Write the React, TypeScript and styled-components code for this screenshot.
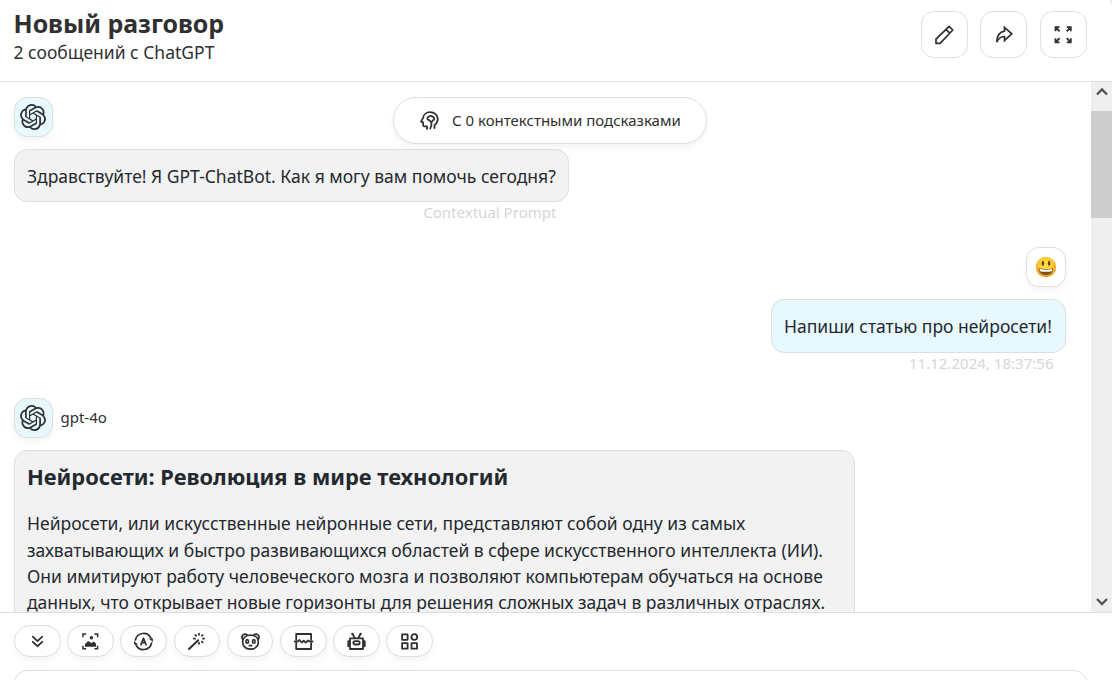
import React from "react";
import styled, { createGlobalStyle } from "styled-components";
import { SiOpenai } from "react-icons/si";

const GlobalStyle = createGlobalStyle`
  *, *::before, *::after { box-sizing: border-box; }
  html, body { margin: 0; height: 100%; overflow: hidden; background: #ececec; }
  body { font-family: "Noto Sans", sans-serif; color: #303030; }
`;

const Window = styled.div`
  width: 1113px;
  height: 688px;
  margin-top: -8px;
  padding-top: 8px;
  display: flex;
  flex-direction: column;
  background: #fff;
  border-top-right-radius: 20px;
  overflow: hidden;
`;

const Header = styled.header`
  flex: none;
  height: 82px;
  padding: 9px 26px 0 13.5px;
  display: flex;
  justify-content: space-between;
  border-bottom: 1px solid #dedede;
`;

const Title = styled.h1`
  margin: 0;
  font-size: 24.9px;
  line-height: 29px;
  padding-bottom: 1px;
  font-weight: 700;
  white-space: nowrap;
`;

const SubTitle = styled.div`
  font-size: 17.5px;
  line-height: 27px;
  white-space: nowrap;
`;

const Actions = styled.div`
  display: flex;
  gap: 12.5px;
  padding-top: 2px;
`;

const IconButton = styled.button`
  width: 47px;
  height: 47px;
  padding: 0;
  display: flex;
  align-items: center;
  justify-content: center;
  border: 1px solid #dedede;
  border-radius: 13px;
  background: #fff;
  color: #303030;

  &:nth-child(2) {
    margin-left: -0.5px;
    margin-right: 0.5px;
    padding-left: 1px;
  }
`;

const Body = styled.main`
  flex: none;
  height: 530px;
  display: flex;
  position: relative;
`;

const Messages = styled.section`
  flex: 1;
  padding: 15px 25px 0 14px;
  display: flex;
  flex-direction: column;
  overflow: hidden;
`;

const Message = styled.article<{ $user?: boolean }>`
  flex: none;
  display: flex;
  flex-direction: column;
  align-items: ${(p) => (p.$user ? "flex-end" : "flex-start")};
`;

const Sender = styled.div`
  display: flex;
  align-items: center;
  gap: 7.5px;
  margin-bottom: 12px;
  font-size: 15px;
  line-height: 20px;
`;

const ModelName = styled.span`
  padding-bottom: 2px;
`;

const Avatar = styled.div<{ $bot?: boolean }>`
  width: ${(p) => (p.$bot ? "39px" : "40px")};
  height: 40px;
  padding-right: ${(p) => (p.$bot ? "1px" : "0")};
  padding-bottom: ${(p) => (p.$bot ? "1px" : "0")};
  display: flex;
  align-items: center;
  justify-content: center;
  border: 1px solid #dedede;
  border-radius: 13px;
  background: ${(p) => (p.$bot ? "#e7f8ff" : "#fff")};
  box-shadow: 0 3px 6px rgba(0, 0, 0, 0.05);
`;

const Bubble = styled.div<{ $user?: boolean; $width: number; $tall?: boolean }>`
  width: ${(p) => p.$width}px;
  padding: ${(p) => (p.$tall ? "10px 12px 13px" : "12px")};
  height: ${(p) => (p.$tall ? "auto" : p.$user ? "54px" : "53px")};
  border: 1px solid #dedede;
  border-radius: 13px;
  background: ${(p) => (p.$user ? "#e7f8ff" : "#f2f2f2")};
  color: #24292f;
  font-size: 17.5px;
  line-height: 28px;
  white-space: nowrap;
`;

const Stamp = styled.div`
  height: 45px;
  padding-right: 12.5px;
  font-size: 15.05px;
  line-height: 20px;
  color: #d6d6d6;
  text-align: right;
`;

const Group = styled.div`
  display: flex;
  flex-direction: column;
`;

const Heading = styled.h2`
  margin: 0 0 17.3px;
  font-size: 21.88px;
  line-height: 32px;
  font-weight: 700;
`;

const Paragraph = styled.p`
  margin: 0;
  line-height: 26.3px;
`;

const PromptPill = styled.div`
  position: absolute;
  left: 393px;
  top: 15px;
  width: 314px;
  height: 47px;
  padding: 0 0 1px 24.5px;
  display: flex;
  align-items: center;
  gap: 12.5px;
  border: 1px solid #dedede;
  border-radius: 24px;
  background: #fff;
  box-shadow: 0 3px 6px rgba(0, 0, 0, 0.05);
  font-size: 15px;
  white-space: nowrap;
`;

const ScrollTrack = styled.aside`
  flex: none;
  width: 22px;
  display: flex;
  flex-direction: column;
  align-items: center;
  justify-content: space-between;
  padding: 5px 1px 6px 0;
  background: #efefef;
  position: relative;
`;

const ScrollThumb = styled.div`
  position: absolute;
  top: 29px;
  left: 0;
  width: 22px;
  height: 107px;
  background: #cdcdcd;
`;

const InputPanel = styled.footer`
  flex: 1;
  padding: 12px 26px 0 14px;
  border-top: 1px solid #dedede;
  overflow: hidden;
`;

const Tools = styled.div`
  display: flex;
  gap: 6.5px;
  margin-bottom: 13px;
`;

const Chip = styled.button`
  width: 46.7px;
  height: 32px;
  padding: 0;
  display: flex;
  align-items: center;
  justify-content: center;
  border: 1px solid #dedede;
  border-radius: 27px;
  background: #fff;
  color: #303030;
  box-shadow: 0 3px 6px rgba(0, 0, 0, 0.05);
`;

const InputBox = styled.div`
  height: 90px;
  border: 1px solid #dedede;
  border-radius: 13px;
  background: #fff;
`;

const Icon = ({ children, w = 1.7 }: { children: React.ReactNode; w?: number }) => (
  <svg
    width="21"
    height="21"
    viewBox="0 0 21 21"
    fill="none"
    stroke="currentColor"
    strokeWidth={w}
    strokeLinecap="round"
    strokeLinejoin="round"
  >
    {children}
  </svg>
);

const Pencil = () => (
  <Icon w={1.7}>
    <path d="M2 19.3v-4.1L15.1 2.3l3.7 3.7L6.1 19.3z M11.9 5.4l3.8 3.8" />
  </Icon>
);

const Share = () => (
  <Icon w={1.7}>
    <path strokeLinejoin="miter" d="M10.5 3.3l7.3 6.5-7.3 6.7v-4c-3.5 0-5.8 1.7-7.8 5.5.2-6.2 2.6-10 7.8-10.9z" />
  </Icon>
);

const Expand = () => (
  <Icon w={1.8}>
    <path
      strokeLinecap="butt"
      strokeLinejoin="miter"
      d="M2.5 7.2V3.2h4 M2.8 3.5l3.8 3.8 M13.8 3.2h4v4 M17.5 3.5l-3.8 3.8 M2.5 14.3v4h4 M2.8 18l3.8-3.8 M13.8 18.3h4v-4 M17.5 18l-3.8-3.8"
    />
  </Icon>
);

const Head = () => (
  <Icon w={1.8}>
    <path d="M8 18.9v-2.6H5.4c-.8 0-1.3-.5-1.3-1.3v-2.7L2 11.6l2-3.5C4.4 4.6 7.2 2.2 11 2.2c4.5 0 7.8 2.9 7.8 6.9 0 3-1.6 4.7-3.3 6.2v2.7" />
    <path d="M11.2 18.5l1.2-3.3v-2.8 M12.4 12.4L9.8 9.9c-1.6-.2-2-2.5-.3-3 .7-1.3 3.5-1.5 4.2-.1 2 .3 2.2 3.1.2 3.5z" />
  </Icon>
);

const ChevronsDown = () => (
  <Icon w={1.8}>
    <path d="M5.8 5.7l4.7 4.4 4.7-4.4 M5.8 10.8l4.7 4.4 4.7-4.4" />
  </Icon>
);

const Picture = () => (
  <Icon w={1.5}>
    <path strokeLinecap="butt" strokeLinejoin="miter" d="M3 6.2V3.1h3.200 M14.400 3.1h3.2v3.1 M3 14.7v3.1h3.2 M14.4 17.8h3.2v-3.1" />
    <circle cx="11.4" cy="6.8" r="1.7" fill="currentColor" stroke="none" />
    <path stroke="none" fill="currentColor" d="M5 15.8v-2.9l3.2-3 3.1 2.1 2.7-1.5 2 2.3v3z" />
  </Icon>
);

const AutoTheme = () => (
  <Icon w={1.7}>
    <path d="M2.4 9A8.3 8.3 0 0 1 18 7.2 M18.6 12A8.3 8.3 0 0 1 3 13.8" />
    <path fill="currentColor" stroke="none" d="M15.9 7.6h4V11z M5.1 13.4h-4V10z" />
    <path d="M7.9 13.8l2.6-6.6 2.6 6.6 M8.8 11.7h3.4" />
  </Icon>
);

const Wand = () => (
  <Icon w={1.7}>
    <path strokeWidth="2" d="M3 18L12.2 9.2" />
    <path d="M13 2.5v1.3 M13 11.6v1.3 M7.8 7.6h1.3 M16.9 7.6h1.3 M9.3 4l.9.9 M16.7 4l-.9.9 M16.7 11.4l-.9-.9" />
  </Icon>
);

const Panda = () => (
  <Icon w={1.7}>
    <path d="M3 8.7C.9 6.5 2.2 3.2 5.2 3.2c1.3 0 2 .6 2.5 1.3 1.9-.6 3.7-.6 5.6 0 .5-.7 1.2-1.3 2.5-1.3 3 0 4.3 3.3 2.2 5.5 1.3 5.1-1.7 9.5-7.5 9.500S1.7 13.8 3 8.7z M2.9 8.7c.8-2 2.3-3.5 4.6-4.2 M18.1 8.7c-.8-2-2.3-3.5-4.6-4.2" />
    <ellipse cx="7.2" cy="10.4" rx="1.3" ry="1.7" />
    <ellipse cx="13.8" cy="10.4" rx="1.3" ry="1.7" />
    <path d="M9.4 14.7h2.2" />
  </Icon>
);

const Break = () => (
  <Icon w={1.8}>
    <path d="M3.2 8.5V3h14.900v5.5 M3.2 12.3V18h14.9v-5.7 M1.7 10.5h2.9L6.4 9l2.3 2.5 2-1.9 2.1 2.1L15 9.5l1.8 1h2.8" />
  </Icon>
);

const Robot = () => (
  <Icon w={1.8}>
    <path d="M4 7.4h13V18H4z M4 10.2H2.3v5H4 M17 10.2h1.7v5H17 M9 7.2L6.5 3 M12 7.2L14.5 3" />
    <rect x="7.3" y="10.1" width="6.4" height="3.4" rx="1.7" />
    <circle cx="6.4" cy="2.9" r="1.1" fill="currentColor" stroke="none" />
    <circle cx="14.6" cy="2.9" r="1.1" fill="currentColor" stroke="none" />
  </Icon>
);

const Grid = () => (
  <Icon w={1.8}>
    <rect x="3.1" y="3.3" width="5.5" height="5.5" />
    <circle cx="15.3" cy="6" r="2.9" />
    <rect x="3.1" y="12.2" width="5.5" height="5.5" />
    <rect x="12.5" y="12.2" width="5.5" height="5.5" />
  </Icon>
);

const Smiley = () => (
  <svg width="22" height="22" viewBox="0 0 22 22">
    <defs>
      <radialGradient id="face" cx="50%" cy="38%" r="62%">
        <stop offset="0" stopColor="#ffe14a" />
        <stop offset="0.6" stopColor="#fcc632" />
        <stop offset="1" stopColor="#e98a15" />
      </radialGradient>
    </defs>
    <circle cx="11" cy="11" r="10.2" fill="url(#face)" />
    <ellipse cx="7.9" cy="7.3" rx="1.2" ry="2.5" fill="#693e0c" />
    <ellipse cx="14.1" cy="7.3" rx="1.2" ry="2.5" fill="#693e0c" />
    <path d="M3.8 12.2q7.2 1.7 14.4 0c-.2 4.4-3 6.7-7.2 6.7s-7-2.3-7.200-6.7z" fill="#7b5014" />
    <path d="M4.6 13q6.4 1.3 12.8 0l-.5 2.2q-5.9 1.3-11.8 0z" fill="#fff" />
  </svg>
);

const ScrollArrow = ({ up }: { up?: boolean }) => (
  <svg width="12" height="9" viewBox="0 0 12 9" fill="none" stroke="#555" strokeWidth="2.4">
    <path d={up ? "M1 7.500l5-5 5 5" : "M1 2l5 5 5-5"} />
  </svg>
);

const tools = [ChevronsDown, Picture, AutoTheme, Wand, Panda, Break, Robot, Grid];

const article = [
  "Нейросети, или искусственные нейронные сети, представляют собой одну из самых",
  "захватывающих и быстро развивающихся областей в сфере искусственного интеллекта (ИИ).",
  "Они имитируют работу человеческого мозга и позволяют компьютерам обучаться на основе",
  "данных, что открывает новые горизонты для решения сложных задач в различных отраслях.",
];

export default function App() {
  return (
    <>
      <GlobalStyle />
      <Window>
        <Header>
          <div>
            <Title>Новый разговор</Title>
            <SubTitle>2 сообщений с ChatGPT</SubTitle>
          </div>
          <Actions>
            <IconButton><Pencil /></IconButton>
            <IconButton><Share /></IconButton>
            <IconButton><Expand /></IconButton>
          </Actions>
        </Header>
        <Body>
          <Messages>
            <Message>
              <Sender><Avatar $bot><SiOpenai size={26} /></Avatar></Sender>
              <Group>
                <Bubble $width={555}>Здравствуйте! Я GPT-ChatBot. Как я могу вам помочь сегодня?</Bubble>
                <Stamp>Contextual Prompt</Stamp>
              </Group>
            </Message>
            <Message $user>
              <Sender><Avatar><Smiley /></Avatar></Sender>
              <Group>
                <Bubble $user $width={295}>Напиши статью про нейросети!</Bubble>
                <Stamp>11.12.2024, 18:37:56</Stamp>
              </Group>
            </Message>
            <Message>
              <Sender>
                <Avatar $bot><SiOpenai size={26} /></Avatar>
                <ModelName>gpt-4o</ModelName>
              </Sender>
              <Bubble $width={841} $tall>
                <Heading>Нейросети: Революция в мире технологий</Heading>
                <Paragraph>
                  {article.map((line) => (
                    <React.Fragment key={line}>{line}<br /></React.Fragment>
                  ))}
                </Paragraph>
              </Bubble>
            </Message>
          </Messages>
          <ScrollTrack>
            <ScrollArrow up />
            <ScrollThumb />
            <ScrollArrow />
          </ScrollTrack>
          <PromptPill><Head />С 0 контекстными подсказками</PromptPill>
        </Body>
        <InputPanel>
          <Tools>
            {tools.map((Tool, i) => (
              <Chip key={i}><Tool /></Chip>
            ))}
          </Tools>
          <InputBox />
        </InputPanel>
      </Window>
    </>
  );
}
